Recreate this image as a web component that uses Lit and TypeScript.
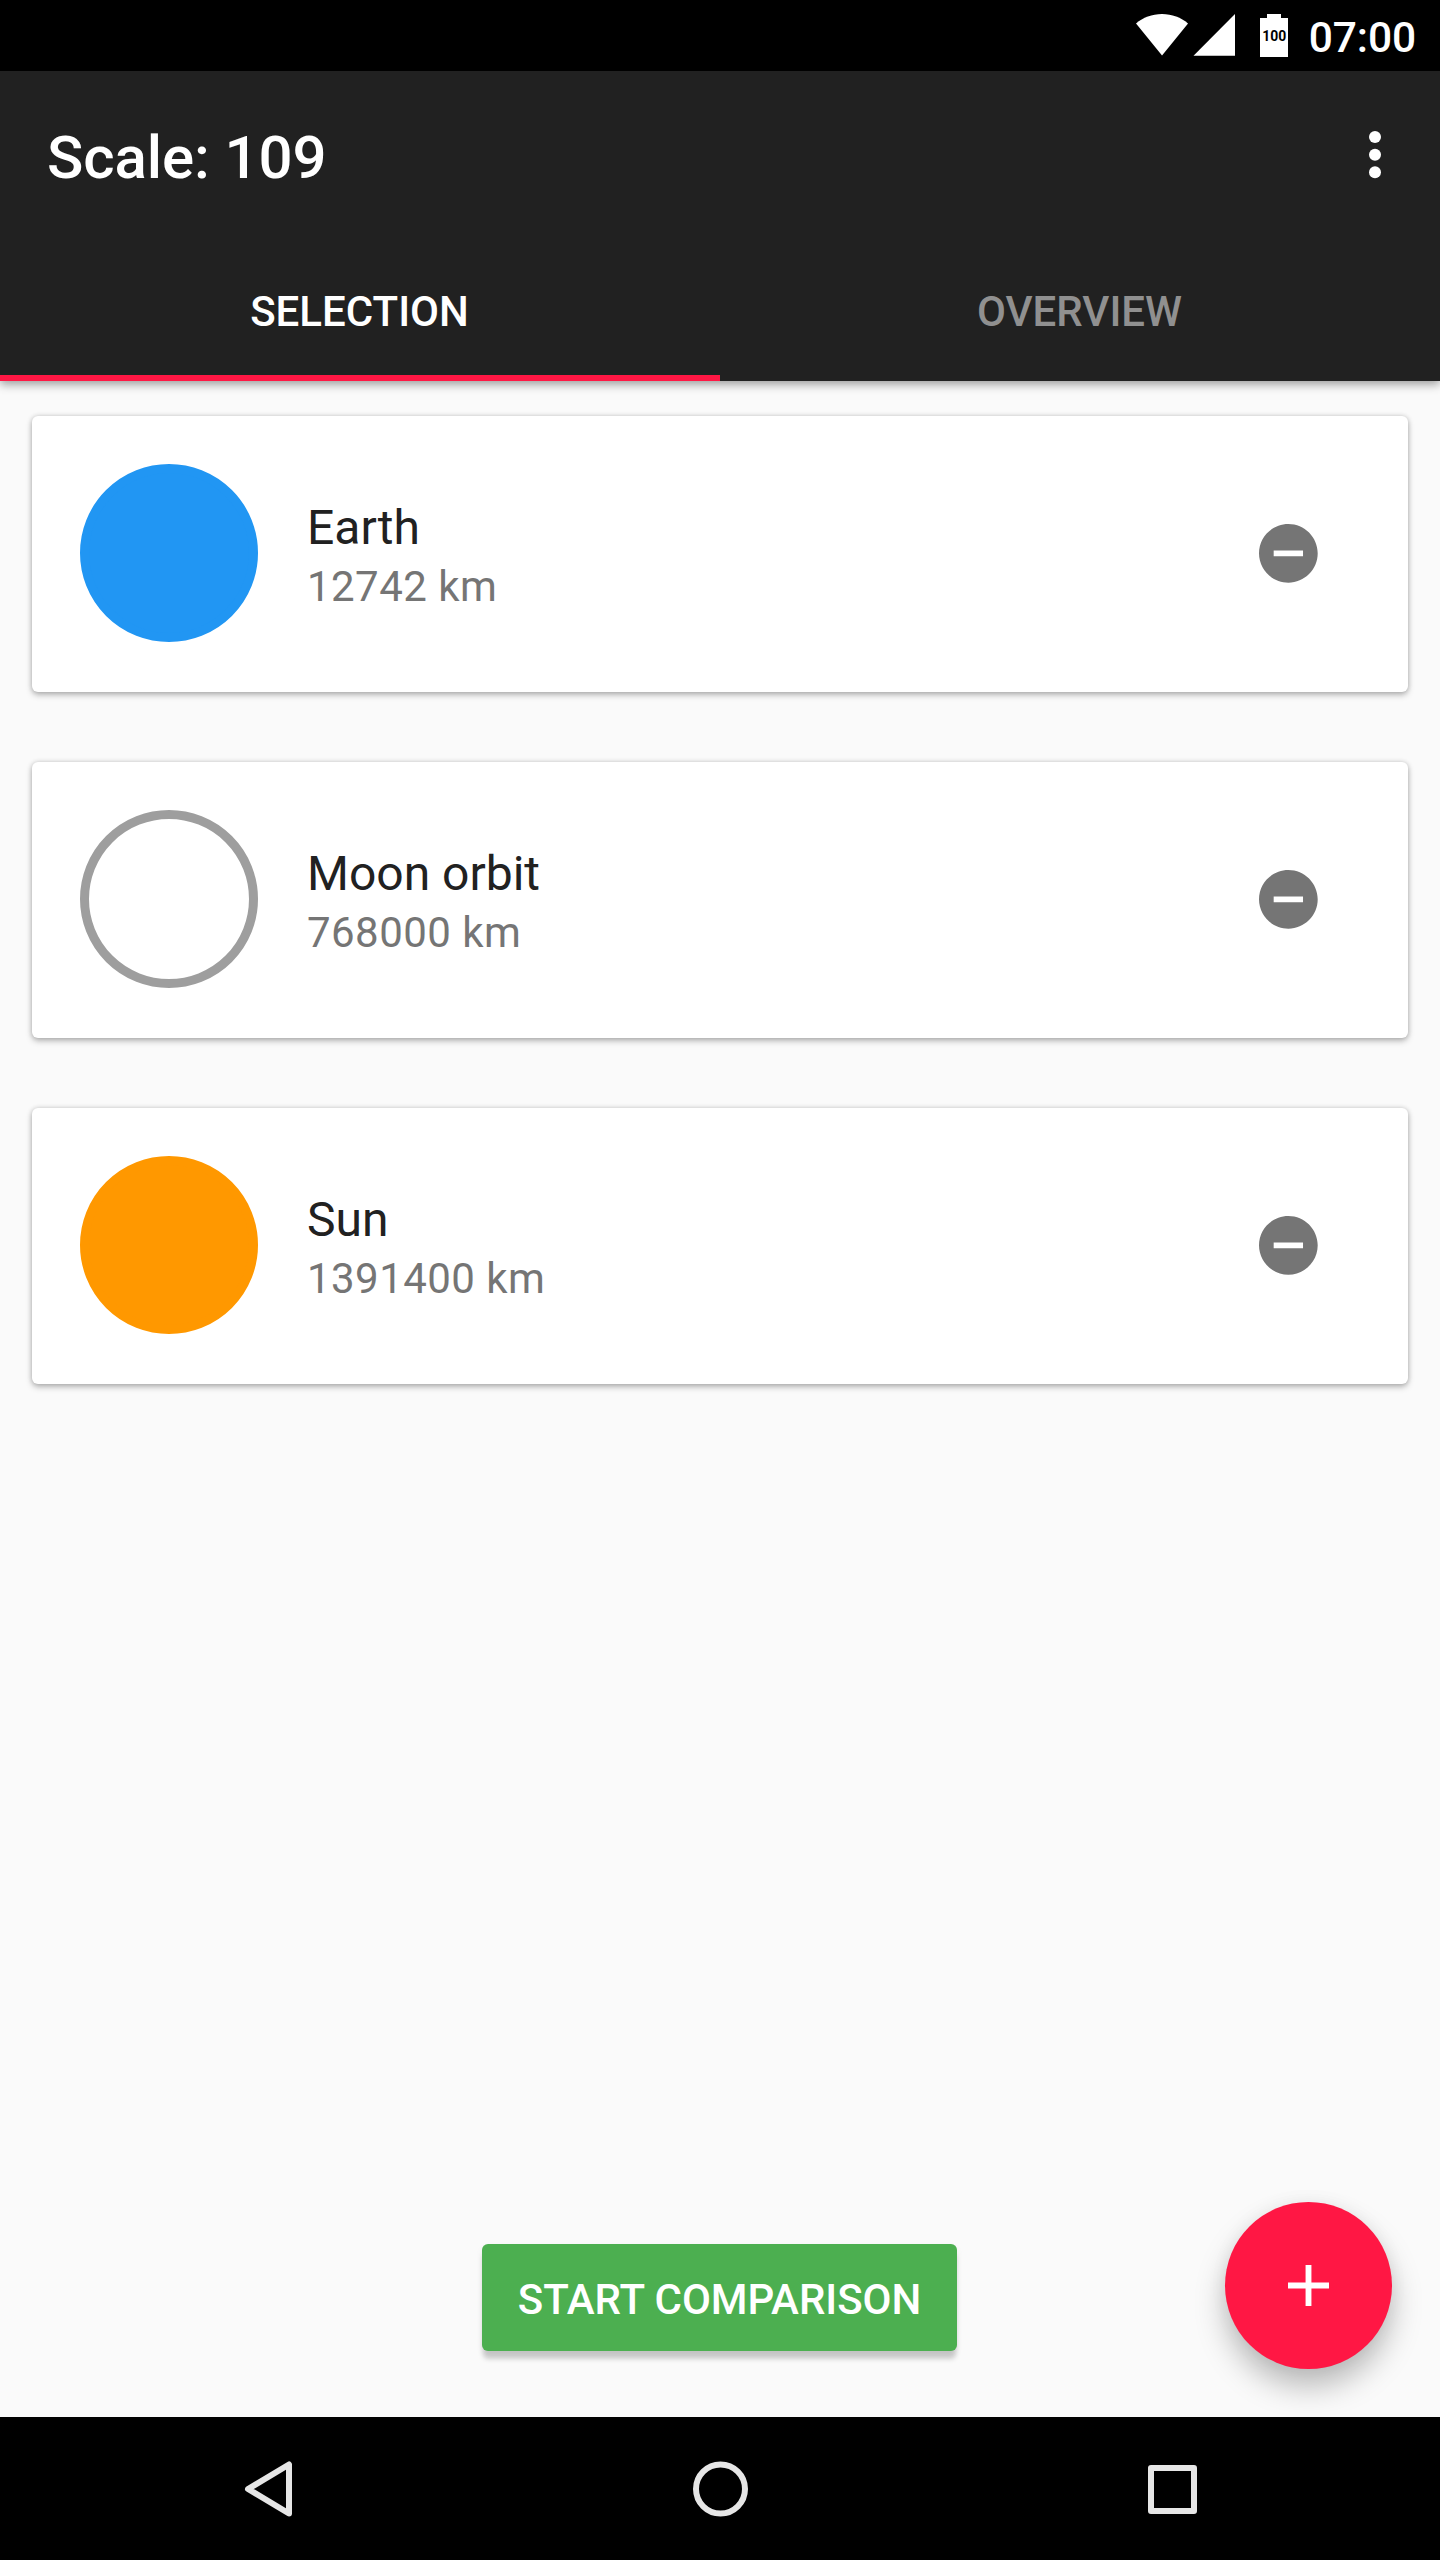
import { LitElement, html, css } from "lit";
import { customElement, property, state } from "lit/decorators.js";
import { classMap } from "lit/directives/class-map.js";
import { styleMap } from "lit/directives/style-map.js";

interface Item {
  name: string;
  size: number;
  color: string;
  orbit?: boolean;
}

@customElement("status-bar")
class StatusBar extends LitElement {
  static styles = css`
    :host {
      display: flex;
      box-sizing: border-box;
      height: 71px;
      padding-right: 24px;
      justify-content: flex-end;
      background: #000;
      color: #fff;
    }
    .icons {
      display: block;
      width: 160px;
      height: 71px;
      margin-right: 15px;
    }
    .level {
      font: 700 15.500px "Roboto", sans-serif;
    }
    .clock {
      width: 109px;
      text-align: right;
      font-size: 42.500px;
      font-weight: 500;
      letter-spacing: -0.1px;
      line-height: 50px;
      padding-top: 13px;
    }
  `;
  render() {
    return html`
      <svg class="icons" viewBox="0 0 160 71" fill="#fff">
        <path d="M4 23.500C11 17.500 20 14 30 14s19 3.500 26 9.500L30 55.500z" />
        <path d="M103 14v41.700H61.500z" />
        <path d="M135 14h14v4h7v39h-28V18h7z" />
        <text class="level" x="142.300" y="41.300" text-anchor="middle" textLength="24" lengthAdjust="spacingAndGlyphs" fill="#000">100</text>
      </svg>
      <span class="clock">07:00</span>
    `;
  }
}

@customElement("body-card")
class BodyCard extends LitElement {
  @property({ attribute: false }) item!: Item;

  static styles = css`
    :host {
      display: flex;
      box-sizing: border-box;
      height: 276px;
      padding: 48px 90px 50px 48px;
      background: #fff;
      border-radius: 6px;
      box-shadow: 0 3px 6px rgba(0, 0, 0, 0.26), 0 0 5px rgba(0, 0, 0, 0.16);
    }
    .disc {
      box-sizing: border-box;
      width: 178px;
      height: 178px;
      border: 9px solid;
      border-radius: 50%;
    }
    .text {
      flex: 1;
      padding: 36px 0 0 49px;
    }
    .name {
      font-size: 48px;
      line-height: 56px;
      color: #212121;
    }
    .size {
      font-size: 42px;
      letter-spacing: 0.45px;
      line-height: 56px;
      margin-top: 3px;
      color: #757575;
    }
    .remove {
      width: 59px;
      height: 59px;
      margin-top: 60px;
    }
  `;
  render() {
    const { name, size, color, orbit } = this.item;
    const look = { borderColor: color, background: orbit ? "transparent" : color };
    return html`
      <div class="disc" style=${styleMap(look)}></div>
      <div class="text">
        <div class="name">${name}</div>
        <div class="size">${size} km</div>
      </div>
      <svg class="remove" viewBox="2 2 20.100 20.100" fill="#757575">
        <path d="M12 2C6.480 2 2 6.480 2 12s4.480 10 10 10 10-4.480 10-10S17.520 2 12 2zm5 11H7v-2h10v2z" />
      </svg>
    `;
  }
}

@customElement("nav-bar")
class NavBar extends LitElement {
  static styles = css`
    :host {
      display: grid;
      grid-template-columns: 452px 452px 452px;
      justify-content: center;
      align-items: center;
      height: 143px;
      background: #000;
    }
    .key {
      display: block;
      width: 72px;
      height: 72px;
      margin: auto;
      fill: none;
      stroke: #e6e6e6;
      stroke-width: 6px;
      stroke-linejoin: round;
    }
  `;
  render() {
    return html`
      <svg class="key" viewBox="0 0 72 72"><path d="M57 11.500v49L16 36z" /></svg>
      <svg class="key" viewBox="0 0 72 72"><circle cx="36.500" cy="36" r="24.500" /></svg>
      <svg class="key" viewBox="0 0 72 72"><rect x="15" y="15" width="43" height="43" /></svg>
    `;
  }
}

@customElement("app-root")
class AppRoot extends LitElement {
  @state() private tab = 0;

  private items: Item[] = [
    { name: "Earth", size: 12742, color: "#2196f3" },
    { name: "Moon orbit", size: 768000, color: "#9e9e9e", orbit: true },
    { name: "Sun", size: 1391400, color: "#ff9800" },
  ];

  static styles = css`
    :host {
      display: flex;
      flex-direction: column;
      width: 1440px;
      height: 2560px;
      overflow: hidden;
      background: #fafafa;
      font-family: "Roboto", sans-serif;
    }
    .bar {
      background: #212121;
      color: #fff;
      height: 310px;
      display: flex;
      flex-direction: column;
      box-shadow: 0 4px 9px rgba(0, 0, 0, 0.3), 0 0 9px rgba(0, 0, 0, 0.12);
    }
    .top {
      display: flex;
      justify-content: space-between;
      height: 168px;
      padding: 0 59.500px 0 47px;
    }
    .title {
      font-size: 60px;
      font-weight: 500;
      letter-spacing: -0.1px;
      line-height: 70px;
      padding-top: 52px;
    }
    .more {
      width: 12px;
      height: 48px;
      margin-top: 60px;
    }
    .tabs {
      display: grid;
      grid-template-columns: 1fr 1fr;
      flex: 1;
    }
    .tab {
      box-sizing: border-box;
      border-bottom: 6px solid transparent;
      padding: 49px 1px 0 0;
      text-align: center;
      font-size: 42px;
      font-weight: 500;
      line-height: 48px;
      color: #909090;
    }
    .tab.on {
      color: #fff;
      border-color: #ff1744;
    }
    .content {
      flex: 1;
      display: flex;
      flex-direction: column;
      padding: 35px 32px 0;
    }
    .list {
      display: flex;
      flex-direction: column;
      gap: 70px;
      flex: 1;
    }
    .actions {
      display: grid;
      grid-template-columns: 450px 475px 1fr;
      align-items: start;
      height: 215px;
    }
    .start {
      grid-column: 2;
      height: 107px;
      margin-top: 42px;
      border-radius: 6px;
      background: #4caf50;
      color: #fff;
      text-align: center;
      font-size: 42px;
      font-weight: 500;
      letter-spacing: -0.050px;
      line-height: 111px;
      box-shadow: 0 9px 5px -1px rgba(0, 0, 0, 0.18), 0 3px 7px rgba(0, 0, 0, 0.06);
    }
    .fab {
      justify-self: end;
      display: flex;
      align-items: center;
      justify-content: center;
      width: 167px;
      height: 167px;
      margin-right: 16px;
      border-radius: 50%;
      background: #ff1744;
      box-shadow: 0 18px 30px rgba(0, 0, 0, 0.25), 0 0 18px rgba(0, 0, 0, 0.05);
    }
    .plus {
      width: 41px;
      height: 41px;
    }
    nav-bar {
      position: relative;
    }
  `;

  render() {
    return html`
      <status-bar></status-bar>
      <header class="bar">
        <div class="top">
          <div class="title">Scale: 109</div>
          <svg class="more" viewBox="0 0 12 48" fill="#fff">
            <circle cx="6" cy="6" r="6" />
            <circle cx="6" cy="23.700" r="6" />
            <circle cx="6" cy="41.300" r="6" />
          </svg>
        </div>
        <div class="tabs">
          ${["SELECTION", "OVERVIEW"].map(
            (label, i) => html`<div
              class=${classMap({ tab: true, on: i === this.tab })}
              @click=${() => (this.tab = i)}
            >${label}</div>`
          )}
        </div>
      </header>
      <main class="content">
        <div class="list">
          ${this.items.map((item) => html`<body-card .item=${item}></body-card>`)}
        </div>
        <div class="actions">
          <div class="start">START COMPARISON</div>
          <div class="fab">
            <svg class="plus" viewBox="5 5 14 14" fill="#fff">
              <path d="M19 13h-6v6h-2v-6H5v-2h6V5h2v6h6v2z" />
            </svg>
          </div>
        </div>
      </main>
      <nav-bar></nav-bar>
    `;
  }
}
